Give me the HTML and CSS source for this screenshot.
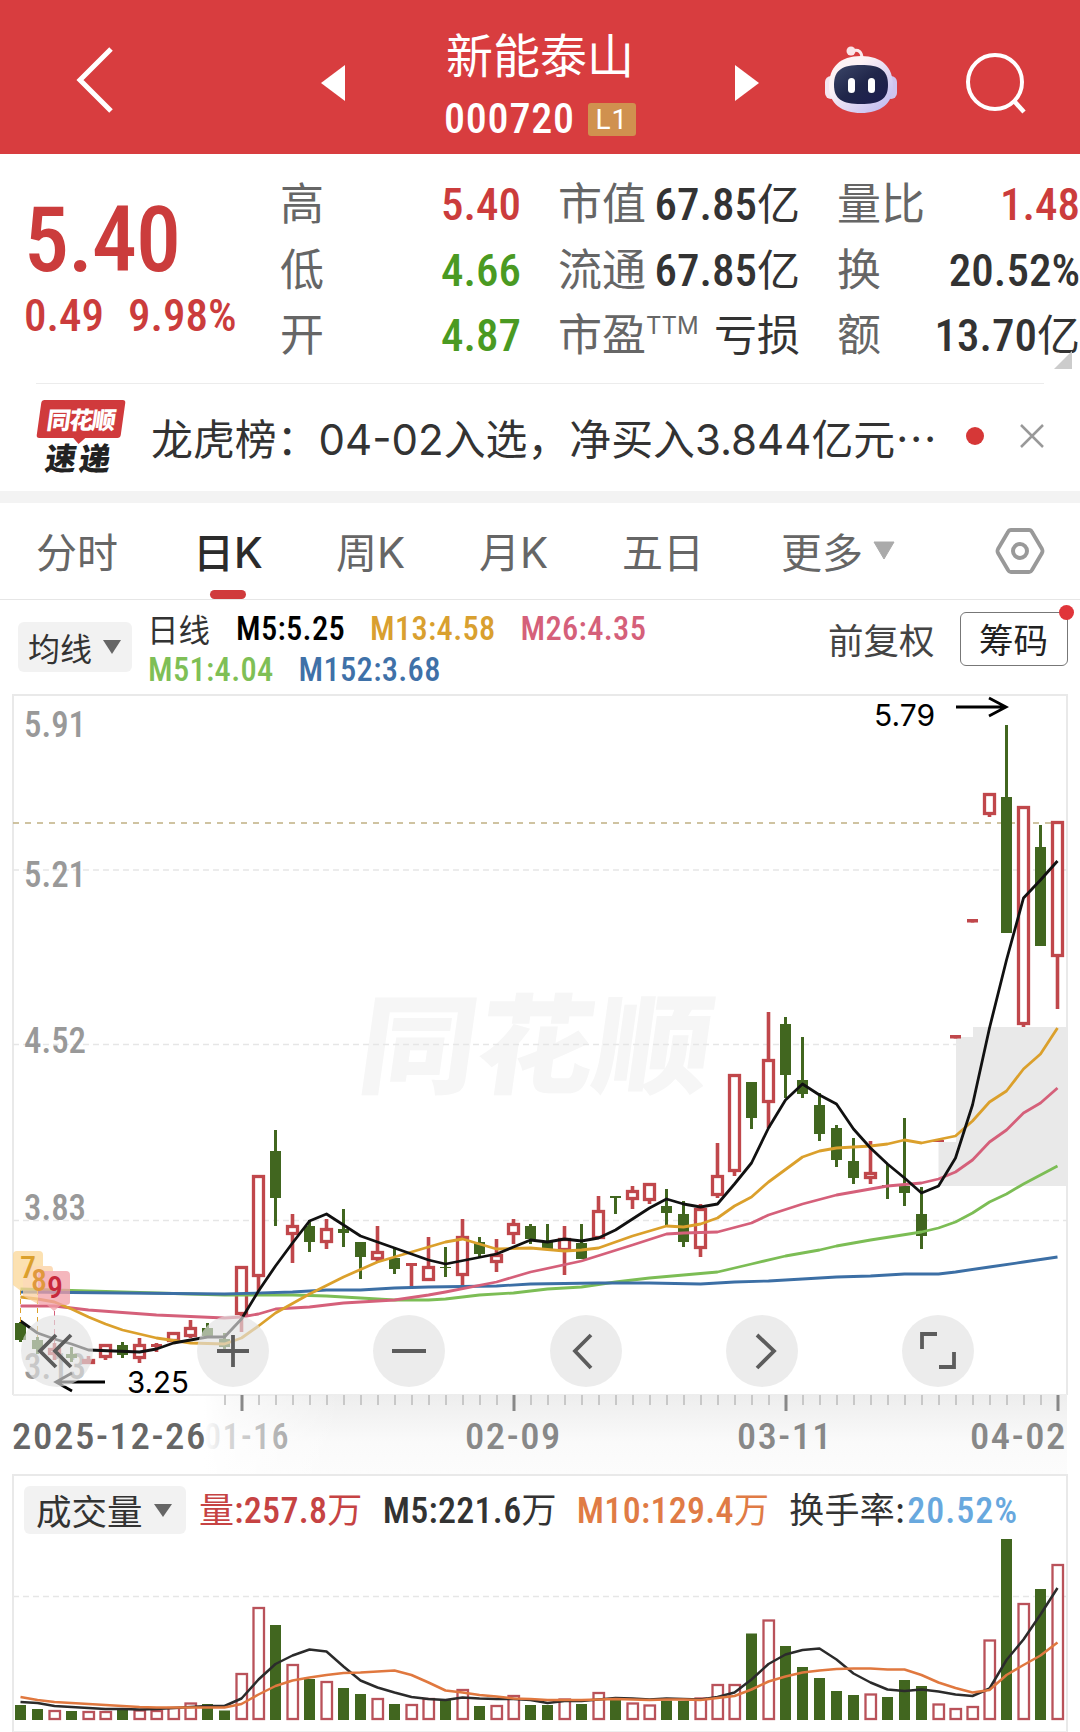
FILE: index.html
```html
<!DOCTYPE html>
<html lang="zh-CN">
<head>
    <meta charset="UTF-8">
    <meta name="viewport" content="width=device-width, initial-scale=1.0">
    <title>新能泰山 000720</title>
    <link rel="stylesheet" href="styles.css">
</head>
<body>

    <!-- 顶部栏 -->
    <header class="header">
        <svg class="back" width="40" height="70" viewBox="0 0 40 70"><path d="M35 5 L4 36 L35 67" fill="none" stroke="#fff" stroke-width="5"/></svg>
        <svg class="prev" width="24" height="36" viewBox="0 0 24 36"><path d="M0 18 L24 0 V36 Z" fill="#fff"/></svg>
        <div class="title">
            <div class="name">新能泰山</div>
            <div class="code"><span class="num">000720</span><span class="badge">L1</span></div>
        </div>
        <svg class="next" width="24" height="36" viewBox="0 0 24 36"><path d="M24 18 L0 0 V36 Z" fill="#fff"/></svg>
        <svg class="robot" width="74" height="70" viewBox="0 0 74 70">
            <defs>
                <linearGradient id="shell" x1="0" y1="0" x2="1" y2="1">
                    <stop offset="0.3" stop-color="#fdf3f5"/>
                    <stop offset="1" stop-color="#b9b4f0"/>
                </linearGradient>
                <linearGradient id="face" x1="0" y1="0" x2="1" y2="1">
                    <stop offset="0" stop-color="#3c4668"/>
                    <stop offset="0.5" stop-color="#20264a"/>
                    <stop offset="1" stop-color="#1c1c50"/>
                </linearGradient>
            </defs>
            <path d="M28 6 Q38 3 38 14" fill="none" stroke="#fbe9ec" stroke-width="3"/>
            <circle cx="27" cy="6" r="4.5" fill="#fbe4e8"/>
            <rect x="1" y="31" width="12" height="23" rx="6" fill="#f4e6f0"/>
            <rect x="61" y="31" width="12" height="23" rx="6" fill="#cfc4ee"/>
            <path d="M37 11 C58 11 69 22 69 41 C69 59 56 68 37 68 C18 68 5 59 5 41 C5 22 16 11 37 11 Z" fill="url(#shell)"/>
            <path d="M37 20 C56 20 64 25 64 40 C64 54 56 59 37 59 C18 59 10 54 10 40 C10 25 18 20 37 20 Z" fill="url(#face)"/>
            <rect x="24" y="33" width="7" height="15" rx="3.5" fill="#fff"/>
            <rect x="44" y="33" width="7" height="15" rx="3.5" fill="#fff"/>
        </svg>
        <svg class="search" width="64" height="64" viewBox="0 0 64 64"><circle cx="30" cy="30" r="27" fill="none" stroke="#fff" stroke-width="4"/><path d="M49 49 L59 60" stroke="#fff" stroke-width="4.5"/></svg>
    </header>

    <!-- 行情数据 -->
    <section class="quote">
        <div class="price red">
            <div class="now num">5.40</div>
            <div class="change num"><span>0.49</span><span>9.98%</span></div>
        </div>
        <div class="col col-a">
            <div class="row"><span class="key">高</span><span class="num red">5.40</span></div>
            <div class="row"><span class="key">低</span><span class="num green">4.66</span></div>
            <div class="row"><span class="key">开</span><span class="num green">4.87</span></div>
        </div>
        <div class="col col-b">
            <div class="row"><span class="key">市值</span><span class="num">67.85<i>亿</i></span></div>
            <div class="row"><span class="key">流通</span><span class="num">67.85<i>亿</i></span></div>
            <div class="row"><span class="key">市盈<sup>TTM</sup></span><span class="num"><i>亏损</i></span></div>
        </div>
        <div class="col col-c">
            <div class="row"><span class="key">量比</span><span class="num red">1.48</span></div>
            <div class="row"><span class="key">换</span><span class="num">20.52%</span></div>
            <div class="row"><span class="key">额</span><span class="num">13.70<i>亿</i></span></div>
        </div>
        <div class="corner"></div>
    </section>

    <!-- 速递 -->
    <section class="news">
        <div class="logo">
            <div class="logo-top"><span>同花顺</span></div>
            <div class="logo-bottom">速递</div>
        </div>
        <div class="news-text">龙虎榜：<b>04-02</b>入选，净买入<b>3.844</b>亿元<em>⋯</em></div>
        <div class="dot"></div>
        <svg class="close" width="24" height="24" viewBox="0 0 24 24"><path d="M1 1 L23 23 M23 1 L1 23" stroke="#999" stroke-width="2.5"/></svg>
    </section>

    <!-- 周期切换 -->
    <nav class="tabs">
        <span class="tab">分时</span>
        <span class="tab active">日<b>K</b></span>
        <span class="tab">周<b>K</b></span>
        <span class="tab">月<b>K</b></span>
        <span class="tab">五日</span>
        <span class="tab more">更多<svg width="22" height="19" viewBox="0 0 22 19"><path d="M1 1 H21 L11 18 Z" fill="#aaa" stroke="#aaa" stroke-linejoin="round"/></svg></span>
        <svg class="gear" width="50" height="48" viewBox="0 0 50 48"><path d="M16 3 H34 Q36 3 37 5 L47 22 Q48 24 47 26 L37 43 Q36 45 34 45 H16 Q14 45 13 43 L3 26 Q2 24 3 22 L13 5 Q14 3 16 3 Z" fill="none" stroke="#999" stroke-width="3.8"/><circle cx="25" cy="24" r="7" fill="none" stroke="#999" stroke-width="4"/></svg>
    </nav>

    <!-- 均线图例 -->
    <section class="legend">
        <div class="select">均线<svg width="18" height="14" viewBox="0 0 18 14"><path d="M0 0 H18 L9 14 Z" fill="#666"/></svg></div>
        <div class="ma">
            <div class="ma-row num"><i>日线</i><span class="m5">M5:5.25</span><span class="m13">M13:4.58</span><span class="m26">M26:4.35</span></div>
            <div class="ma-row num"><span class="m51">M51:4.04</span><span class="m152">M152:3.68</span></div>
        </div>
        <div class="adjust">前复权</div>
        <div class="chips">筹码</div>
    </section>

    <!-- K线图 -->
    <section class="chart">
        <svg id="kline" width="1080" height="784" viewBox="0 690 1080 784"></svg>
        <div class="controls">
            <button><svg viewBox="0 0 72 72"><path d="M35 20 L19 36 L35 52 M50 20 L34 36 L50 52"/></svg></button>
            <button><svg viewBox="0 0 72 72"><path d="M20 36 H52 M36 20 V52"/></svg></button>
            <button><svg viewBox="0 0 72 72"><path d="M19 36 H53"/></svg></button>
            <button><svg viewBox="0 0 72 72"><path d="M41 20 L25 36 L41 53"/></svg></button>
            <button><svg viewBox="0 0 72 72"><path d="M31 20 L48 36 L31 53"/></svg></button>
            <button><svg viewBox="0 0 72 72"><path d="M35 19 H20 V34 M37 52 H52 V37"/></svg></button>
        </div>
    </section>

    <!-- 成交量 -->
    <section class="volume">
        <div class="volume-head num">
            <div class="select">成交量<svg width="18" height="13" viewBox="0 0 18 13"><path d="M0 0 H18 L9 13 Z" fill="#666"/></svg></div>
            <span class="v-now"><i>量</i>:257.8<i>万</i></span>
            <span class="v-m5">M5:221.6<i>万</i></span>
            <span class="v-m10">M10:129.4<i>万</i></span>
            <span class="v-rate"><i>换手率:</i><u>20.52%</u></span>
        </div>
        <svg id="vol" width="1080" height="198" viewBox="0 1534 1080 198"></svg>
    </section>

    <script>
        // 颜色(r 涨 / g 跌), 最高, 实体上沿, 实体下沿, 最低, 成交量
        const days = [
            ["g", 1322, 1323, 1340, 1342, 15], ["g", 1337, 1340, 1349, 1354, 11], ["r", 1343, 1348, 1355, 1360, 10],
            ["g", 1347, 1354, 1358, 1362, 9], ["r", 1356, 1359, 1364, 1364, 9], ["r", 1344, 1344, 1358, 1360, 9],
            ["g", 1342, 1345, 1355, 1358, 10], ["r", 1338, 1344, 1359, 1363, 10.5], ["r", 1343, 1344, 1347, 1352, 10],
            ["r", 1332, 1332, 1342, 1342, 13], ["r", 1320, 1327, 1337, 1338, 17.5], ["g", 1323, 1328, 1336, 1337, 16],
            ["g", 1333, 1339, 1347, 1350, 9.5], ["r", 1266, 1266, 1315, 1332, 47], ["r", 1175, 1175, 1277, 1291, 113],
            ["g", 1130, 1151, 1198, 1226, 95], ["r", 1214, 1225, 1235, 1263, 56], ["g", 1220, 1226, 1242, 1252, 41],
            ["r", 1219, 1228, 1243, 1249, 39], ["g", 1209, 1229, 1233, 1247, 32], ["g", 1242, 1242, 1257, 1279, 26],
            ["r", 1226, 1251, 1260, 1262, 22], ["g", 1248, 1258, 1269, 1274, 16], ["r", 1263, 1263, 1266, 1287, 16],
            ["r", 1237, 1266, 1281, 1281, 22], ["g", 1247, 1267, 1268, 1277, 21], ["r", 1219, 1236, 1276, 1285, 31],
            ["g", 1237, 1242, 1254, 1257, 14], ["r", 1239, 1254, 1263, 1272, 15], ["r", 1219, 1223, 1235, 1244, 25],
            ["g", 1224, 1226, 1239, 1244, 15], ["g", 1224, 1242, 1249, 1249, 15], ["r", 1226, 1238, 1251, 1275, 21.5],
            ["g", 1224, 1243, 1259, 1259, 16], ["r", 1196, 1210, 1239, 1239, 28], ["g", 1196, 1196, 1198, 1214, 20],
            ["r", 1186, 1190, 1200, 1209, 17.5], ["r", 1183, 1183, 1201, 1204, 15.5], ["g", 1189, 1206, 1213, 1226, 19.5],
            ["g", 1201, 1214, 1242, 1247, 19], ["r", 1204, 1208, 1249, 1257, 22.5], ["r", 1143, 1175, 1196, 1198, 36],
            ["r", 1074, 1074, 1172, 1176, 36], ["g", 1082, 1082, 1118, 1129, 86.5], ["r", 1012, 1059, 1103, 1128, 100.5],
            ["g", 1017, 1024, 1075, 1098, 74], ["g", 1037, 1080, 1094, 1098, 53], ["g", 1093, 1105, 1134, 1141, 42],
            ["g", 1125, 1128, 1160, 1167, 29], ["g", 1138, 1161, 1178, 1184, 25], ["r", 1141, 1172, 1179, 1184, 26.5],
            ["g", 1164, 1185, 1186, 1199, 23], ["g", 1118, 1186, 1193, 1206, 40], ["g", 1187, 1214, 1236, 1249, 34],
            ["r", 1140, 1140, 1142, 1142, 16.5], ["r", 1035, 1035, 1038.5, 1038, 12], ["r", 919, 919, 922.5, 922, 14],
            ["r", 793, 793, 815, 817, 80.5], ["g", 725, 797, 933, 933, 181], ["r", 806, 806, 1025, 1027, 117],
            ["g", 825, 847, 946, 946, 131], ["r", 821, 821, 957, 1009, 156]
        ];

        const ma = {
            "#7cbd55": [[0,1289],[4,1291],[8,1293],[12,1295],[16,1295],[18,1296],[20,1298],[22,1300],[24,1300],[25,1299],[27,1295],[29,1293],[31,1289],[33,1287],[35,1282],[37,1278],[39,1275],[41,1272],[42,1268],[43,1264],[45,1256],[47,1250],[48,1246],[50,1240],[53,1232],[54,1228],[55,1222],[56,1213],[57,1202],[58,1194],[59,1184],[61,1166]],
            "#3c6fa5": [[0,1292],[12,1294],[16,1292],[18,1290],[20,1290],[22,1288],[24,1287],[28,1286],[30,1284],[34,1283],[37,1283],[40,1284],[42,1282],[44,1281],[46,1279],[48,1277],[50,1276],[52,1274],[54,1274],[55,1272],[57,1267],[59,1262],[61,1257]],
            "#d5607a": [[0,1306],[2,1306],[4,1310],[8,1315],[12,1318],[13,1317],[14,1314],[15,1309],[17,1307],[19,1303],[20,1302],[22,1300],[24,1295],[25,1292],[28,1282],[30,1272],[33,1261],[36,1245],[38,1234],[39,1233],[41,1232],[43,1223],[44,1215],[46,1204],[48,1195],[51,1186],[53,1183],[54,1179],[55,1172],[56,1160],[57,1142],[58,1130],[59,1113],[60,1103],[61,1088]],
            "#dba02c": [[0,1297],[1,1299],[2,1302],[3,1309],[4,1317],[5,1324],[6,1330],[8,1338],[10,1343],[12,1344],[13,1338],[14,1326],[15,1313],[17,1294],[19,1277],[21,1262],[23,1252],[24,1247],[25,1242],[26,1239],[27,1244],[28,1249],[30,1248],[32,1251],[33,1250],[34,1248],[36,1236],[38,1226],[39,1227],[40,1224],[41,1218],[42,1206],[43,1197],[44,1182],[46,1157],[47,1151],[48,1148],[50,1146],[51,1144],[52,1140],[53,1143],[55,1136],[56,1121],[57,1102],[58,1091],[59,1069],[60,1054],[61,1028]],
            "#111": [[0,1321],[1,1333],[2,1339],[3,1344],[4,1350],[7,1352],[8,1349],[9,1343],[11,1337],[12,1337],[13,1319],[14,1291],[15,1266],[16,1243],[17,1221],[18,1214],[19,1225],[20,1236],[22,1248],[24,1260],[25,1264],[28,1254],[30,1240],[31,1242],[32,1239],[33,1241],[34,1238],[35,1230],[37,1208],[38,1199],[39,1204],[40,1207],[41,1204],[42,1184],[43,1163],[44,1128],[45,1100],[46,1084],[47,1095],[48,1104],[49,1129],[50,1148],[51,1164],[52,1178],[53,1193],[54,1186],[55,1158],[56,1105],[57,1028],[58,960],[59,898],[60,880],[61,861]]
        };

        const volMa = {
            "#2b2b2b": [18,17,14,13,12,11,11,10.5,11,12,13,14,14,21.5,40.5,56,64.5,70.5,68.5,53.5,39.5,32.5,27.5,23,21,20,22.5,21.5,21,21,20,17,19,19,20.5,22,21.5,20.5,21.5,21,20.5,23,27.5,40.5,56,65.5,70,71.5,60.5,46.5,37.5,30.5,29,30.5,28.5,25.5,24,31.5,60,80.5,105.5,132],
            "#e0783f": [23,20,18,17,16,15,14,13,12.5,12.5,12.5,12.5,12.5,16,25.5,34,39.5,42.5,45,47,47.5,48.5,49.5,45,37.5,29.5,27.5,25,23.5,21.5,21,20,20,20,20.5,21,20.5,20,20.5,20.5,20,22,24,30.5,38.5,43.5,47.5,49.5,51,51.5,51.5,50.5,50.5,45,37.5,32,27.5,30,45,55,64.5,77.5]
        };

        const RED = "#c0474b", GREEN = "#41661f";
        const x = i => 20.5 + i * 17;
        const line = (pts, color, w) => `<polyline points="${pts.map(p => x(p[0]) + "," + p[1]).join(" ")}" fill="none" stroke="${color}" stroke-width="${w}" stroke-linejoin="round"/>`;
        const dash = (y, color, d) => `<path d="M13 ${y} H1067" stroke="${color}" stroke-width="1.5" stroke-dasharray="${d}"/>`;
        const label = (cls, left, y, w, t) => `<text class="${cls}" x="${left}" y="${y}" textLength="${w}" lengthAdjust="spacingAndGlyphs">${t}</text>`;

        function drawKline() {
            let s = `<defs>
                <linearGradient id="axis" x1="0" y1="0" x2="0" y2="1"><stop offset="0" stop-color="#ededed"/><stop offset="0.6" stop-color="#fafafa"/><stop offset="1" stop-color="#fcfcfc"/></linearGradient>
                <linearGradient id="fade"><stop offset="0" stop-color="#fff"/><stop offset="0.6" stop-color="#fff"/><stop offset="0.68" stop-color="#fff" stop-opacity="0.65"/><stop offset="1" stop-color="#fff" stop-opacity="0"/></linearGradient>
            </defs>`;

            // 水印
            s += `<text class="watermark" transform="translate(355 1085) skewX(-8)" textLength="352" lengthAdjust="spacingAndGlyphs">同花顺</text>`;

            // 网格
            s += `<path d="M13 1395 V695 H1067 V1395" fill="none" stroke="#e9e9e9" stroke-width="2"/>`;
            s += dash(870, "#e6e6e6", "6 4") + dash(1044.5, "#e6e6e6", "6 4") + dash(1220.5, "#e6e6e6", "6 4");
            s += dash(823, "#c0b083", "6 6");
            s += `<path d="M938.5 1186 V1142 H956 V1037 H973 V1027 H1067 V1186 Z" fill="#e9e9e9"/>`;

            // 纵坐标
            [["5.91", 737], ["5.21", 887], ["4.52", 1053], ["3.83", 1220], ["3.13", 1379]].forEach(t => {
                s += label("price-label", 24, t[1], 62, t[0]);
            });

            // K线
            days.forEach((d, i) => {
                const [c, high, top, bottom, low] = d;
                const cx = x(i);
                const color = c === "r" ? RED : GREEN;
                if (c === "g") {
                    s += `<path d="M${cx} ${high} V${low}" stroke="${color}" stroke-width="3"/>`;
                    s += `<rect x="${cx - 5.5}" y="${top}" width="11" height="${bottom - top}" fill="${color}"/>`;
                } else {
                    s += `<path d="M${cx} ${high} V${top} M${cx} ${bottom} V${low}" stroke="${color}" stroke-width="3.6"/>`;
                    if (bottom - top < 5) {
                        s += `<rect x="${cx - 5.5}" y="${top}" width="11" height="${bottom - top}" fill="${color}"/>`;
                    } else {
                        s += `<rect x="${cx - 5}" y="${top + 1.5}" width="10" height="${bottom - top - 3}" fill="#fff" stroke="${color}" stroke-width="3.3"/>`;
                    }
                }
            });

            // 均线
            for (const color in ma) s += line(ma[color], color, 2.8);

            // 九转标记
            s += `<path d="M20.5 1290 V1322 M37.5 1290 V1337" stroke="#dba02c" stroke-dasharray="5 4"/><path d="M54.5 1311 V1345" stroke="#d5607a" stroke-dasharray="5 4"/>`;
            s += `<g opacity="0.75"><path d="M17 1251 H39 Q43 1251 43 1255 V1282 L21 1291 L13 1285 V1255 Q13 1251 17 1251 Z" fill="#fbd797"/><path d="M28 1266 H50 Q53 1266 53 1270 V1296 L38 1304 L23 1296 V1270 Q23 1266 28 1266 Z" fill="#fbd0a0"/><path d="M42 1271 H66 Q70 1271 70 1275 V1302 Q70 1305 66 1305 H61 L54 1311 L47 1305 H42 Q38 1305 38 1301 V1275 Q38 1271 42 1271 Z" fill="#f2a0a8"/></g>`;
            s += `<text class="nine" x="20" y="1278" fill="#dba02c">7</text><text class="nine" x="31" y="1291" fill="#e0983c">8</text><text class="nine" x="47" y="1298" fill="#c8283c">9</text>`;

            // 最高最低价
            s += `<path d="M956 707 H1005 M989 698 L1006 707 L989 716 M105 1382 H57 M72 1373 L56 1382 L72 1391" fill="none" stroke="#000" stroke-width="2.8"/>`;
            s += label("peak", 874, 726, 61, "5.79") + label("peak", 127, 1393, 62, "3.25");

            // 时间轴
            s += `<rect x="13" y="1394" width="1054" height="80" fill="url(#axis)"/>`;
            s += label("date", 204, 1449, 86, "01-16");
            s += `<rect x="0" y="1396" width="340" height="78" fill="url(#fade)"/>`;
            for (let i = 12; i < 62; i++) {
                const big = i === 13 || (i - 13) % 16 === 0;
                s += `<path d="M${x(i) + 0.5} 1395 V${big ? 1411 : 1405}" stroke="${big ? "#888" : "#bbb"}" stroke-width="${big ? 3 : 1.5}"/>`;
            }
            s += label("date dark", 12, 1449, 195, "2025-12-26");
            s += label("date", 465, 1449, 97, "02-09") + label("date", 737, 1449, 96, "03-11") + label("date", 970, 1449, 97, "04-02");
            document.getElementById("kline").innerHTML = s;
        }

        function drawVolume() {
            const base = 1720;
            let s = dash(1596.5, "#e6e6e6", "6 4");
            days.forEach((d, i) => {
                const h = d[5];
                if (d[0] === "g") {
                    s += `<rect x="${x(i) - 5.5}" y="${base - h}" width="11" height="${h}" fill="${GREEN}"/>`;
                } else {
                    s += `<rect x="${x(i) - 5}" y="${base - h + 1}" width="10.5" height="${h - 2}" fill="#fff" stroke="#b9525a" stroke-width="2.3"/>`;
                }
            });
            for (const color in volMa) s += line(volMa[color].map((h, i) => [i, base - h]), color, 2.5);
            s += `<path d="M13 1534 V1732 M1067 1534 V1732" stroke="#e9e9e9" stroke-width="2"/><path d="M13 1731.5 H1067" stroke="#eee"/>`;
            document.getElementById("vol").innerHTML = s;
        }

        drawKline();
        drawVolume();
    </script>

</body>
</html>
```
FILE: styles.css
```css
* {
    box-sizing: border-box;
}
body {
    margin: 0;
    width: 1080px;
    height: 1732px;
    overflow: hidden;
    background: #fff;
    color: #333;
    font-family: "Noto Sans CJK SC", sans-serif;
}
svg {
    display: block;
    flex: none;
}
.num {
    font-family: Roboto, "Noto Sans CJK SC", sans-serif;
    font-stretch: 75%;
    font-weight: 500;
}
.num i {
    font-family: "Noto Sans CJK SC", sans-serif;
    font-style: normal;
    font-weight: 400;
}
.red {
    color: #cb3c3c;
}
.green {
    color: #4a9a22;
}

/* 顶部栏 */
.header {
    display: flex;
    height: 154px;
    background: #d83d3f;
    color: #fff;
}
.back {
    margin: 44px 0 0 76px;
}
.prev {
    margin: 65px 0 0 205px;
}
.title {
    width: 192px;
    margin: 23px 0 0 101px;
}
.name {
    font-size: 47px;
    line-height: 60px;
    white-space: nowrap;
}
.code {
    display: flex;
    align-items: center;
    margin: 12px 0 0 -2px;
    font-size: 42px;
    line-height: 48px;
    letter-spacing: 0.8px;
}
.badge {
    width: 48px;
    height: 33px;
    margin-left: 13px;
    border-radius: 3px;
    background: #d0914f;
    font: 28px/34px Roboto, sans-serif;
    text-align: center;
}
.next {
    margin: 65px 0 0 97px;
}
.robot {
    margin: 45px 0 0 65px;
}
.search {
    margin: 52px 0 0 67px;
}

/* 行情数据 */
.quote {
    position: relative;
    display: flex;
    height: 229px;
    padding-top: 15px;
}
.price {
    width: 255px;
    padding-left: 24px;
}
.now {
    margin-top: 18px;
    font-size: 90px;
    line-height: 108px;
    letter-spacing: -1px;
}
.change {
    display: flex;
    gap: 24px;
    margin-top: -9px;
    font-size: 45px;
    line-height: 60px;
}
.col {
    font-size: 44px;
}
.col-a {
    width: 241px;
    margin-left: 25px;
}
.col-b {
    width: 242px;
    margin-left: 37px;
}
.col-c {
    width: 243px;
    margin-left: 37px;
}
.row {
    display: flex;
    justify-content: space-between;
    align-items: baseline;
    height: 65.5px;
    line-height: 65px;
    white-space: nowrap;
}
.row .num {
    font-size: 45px;
}
.row .num i {
    font-size: 43px;
}
.key {
    color: #666;
}
.key sup {
    font: 24px/1 Inter, sans-serif;
    position: relative;
    top: -1px;
}
.corner {
    position: absolute;
    right: 8px;
    bottom: 14px;
    border-left: 18px solid transparent;
    border-bottom: 18px solid #ccc;
}

/* 速递 */
.news {
    display: flex;
    align-items: center;
    height: 108px;
    margin: 0 36px;
    padding-bottom: 3px;
    border-top: 1px solid #ececec;
}
.logo {
    width: 90px;
    height: 74px;
    margin-top: 2px;
    text-align: center;
    white-space: nowrap;
}
.logo-top {
    position: relative;
    width: 84px;
    height: 38px;
    margin-left: 3px;
    border-radius: 3px;
    background: #d03a3c;
    color: #fff;
    font-size: 24px;
    font-weight: 900;
    line-height: 37px;
    letter-spacing: -1.5px;
    transform: skewX(-8deg);
}
.logo-top::after {
    content: "";
    position: absolute;
    left: 36px;
    top: 37px;
    border: 7px solid transparent;
    border-top-color: #d03a3c;
    border-bottom: 0;
}
.logo-bottom {
    width: 88px;
    color: #222;
    font-size: 31px;
    font-weight: 900;
    line-height: 37px;
    letter-spacing: 3px;
    transform: skewX(-8deg);
}
.news-text {
    width: 792px;
    margin-left: 25px;
    font-size: 41.9px;
    white-space: nowrap;
}
.news-text b {
    font-family: Inter, sans-serif;
    font-weight: 400;
    font-size: 42px;
}
.news-text em {
    font-style: normal;
}
.dot {
    width: 18px;
    height: 18px;
    margin-left: 23px;
    border-radius: 50%;
    background: #d63737;
}
.close {
    margin-left: 36px;
}

/* 周期切换 */
.tabs {
    display: flex;
    align-items: center;
    height: 109px;
    border-top: 12px solid #f3f3f3;
    border-bottom: 1px solid #e6e6e6;
    color: #666;
    font-size: 41px;
    white-space: nowrap;
}
.tab {
    position: relative;
    width: 143px;
    padding: 0 0 2px 36px;
}
.tab:nth-child(1) {
    width: 157px;
}
.tab b {
    font-family: Inter, sans-serif;
    font-weight: 400;
    font-size: 42px;
}
.tab.active,
.tab.active b {
    color: #2b2b2b;
    font-weight: 500;
}
.tab.active::after {
    content: "";
    position: absolute;
    left: 53px;
    bottom: -17px;
    width: 36px;
    height: 9px;
    border-radius: 5px;
    background: #d03a3c;
}
.tab.more {
    display: flex;
    align-items: center;
    gap: 10px;
    width: 250px;
    margin-left: 16px;
}
.gear {
    margin-left: 0;
}

/* 均线图例 */
.legend {
    display: flex;
    height: 90px;
}
.select {
    display: flex;
    align-items: center;
    background: #f2f2f2;
    border-radius: 6px;
    font-family: "Noto Sans CJK SC", sans-serif;
    font-weight: 400;
}
.legend .select {
    width: 114px;
    height: 50px;
    margin: 22px 0 0 18px;
    padding-left: 10px;
    gap: 11px;
    font-size: 32px;
}
.ma {
    width: 680px;
    margin: 7px 0 0 16px;
}
.ma-row {
    display: flex;
    gap: 25px;
    height: 41px;
    font-size: 32.5px;
    line-height: 44px;
    letter-spacing: 0.3px;
}
.ma-row i {
    width: 64px;
    margin: -1px 0 0 -1px;
    font-size: 31.5px;
    letter-spacing: 0;
}
.m5 { color: #000; }
.m13 { color: #d9a02f; }
.m26 { color: #d5607a; }
.m51 { color: #7fbf56; }
.m152 { color: #3f71a8; }
.adjust {
    margin-top: 14px;
    font-size: 35.5px;
    line-height: 50px;
    color: #444;
}
.chips {
    position: relative;
    width: 108px;
    height: 54px;
    margin: 12px 0 0 25px;
    border: 1.5px solid #777;
    border-radius: 6px;
    color: #222;
    font-size: 34.5px;
    line-height: 51px;
    text-align: center;
}
.chips::after {
    content: "";
    position: absolute;
    right: -7px;
    top: -8px;
    width: 15px;
    height: 15px;
    border-radius: 50%;
    background: #e0353a;
}

/* K线图 */
.chart {
    position: relative;
    height: 784px;
}
.watermark {
    font: 900 108px "Noto Sans CJK SC", sans-serif;
    fill: #f6f6f6;
}
.price-label {
    font: 500 36px Roboto, sans-serif;
    font-stretch: 75%;
    fill: #999;
}
.peak {
    font: 400 30px Inter, sans-serif;
    fill: #000;
}
.nine {
    font: 500 32px Roboto, sans-serif;
    font-stretch: 75%;
}
.date {
    font: 500 36px Roboto, sans-serif;
    font-stretch: 75%;
    letter-spacing: 1.5px;
    fill: #888;
}
.date.dark {
    fill: #666;
}
.controls {
    position: absolute;
    left: 21px;
    top: 625px;
    display: flex;
    gap: 104.2px;
}
.controls button {
    width: 72px;
    height: 72px;
    padding: 0;
    border: none;
    border-radius: 50%;
    background: rgba(226, 226, 226, 0.65);
}
.controls path {
    fill: none;
    stroke: #5c5c5c;
    stroke-width: 3.8;
}

/* 成交量 */
.volume-head {
    display: flex;
    height: 60px;
    margin: 0 12px;
    border: 2px solid #e9e9e9;
    border-bottom: none;
    padding-left: 10px;
    font-size: 36px;
    line-height: 64px;
    letter-spacing: 0.3px;
    white-space: nowrap;
}
.volume-head i {
    font-size: 35px;
}
.volume-head .select {
    width: 162px;
    height: 48px;
    margin-top: 10px;
    padding-left: 12px;
    gap: 11px;
    font-size: 35.5px;
    letter-spacing: 0;
}
.v-now {
    margin-left: 13px;
    color: #c64343;
}
.v-m5 {
    margin-left: 20px;
}
.v-m10 {
    margin-left: 20px;
    color: #e07b45;
}
.v-rate {
    margin-left: 20px;
}
.v-rate u {
    margin-left: 2px;
    color: #68a8de;
    letter-spacing: 1px;
    text-decoration: none;
}
```
